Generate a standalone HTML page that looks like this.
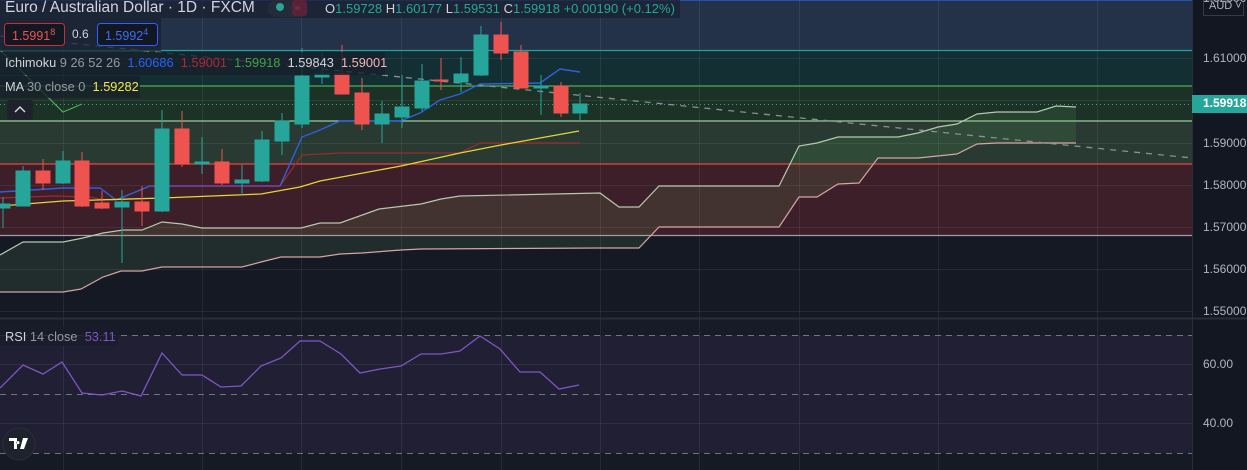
<!DOCTYPE html>
<html><head><meta charset="utf-8"><style>
html,body{margin:0;padding:0;background:#151924;width:1247px;height:470px;overflow:hidden;font-family:"Liberation Sans",sans-serif}
svg{position:absolute;left:0;top:0}
.t{position:absolute;white-space:nowrap;font-size:13px;color:#d1d4dc}
.ax{position:absolute;left:1203px;font-size:12px;color:#b2b5be}
</style></head><body>
<svg width="1247" height="470" viewBox="0 0 1247 470">
<rect x="0" y="0" width="1192" height="51" fill="#233149"/>
<rect x="0" y="51" width="1192" height="35" fill="#132f33"/>
<rect x="0" y="86" width="1192" height="35" fill="#1c3227"/>
<rect x="0" y="121" width="1192" height="43" fill="#283a31"/>
<rect x="0" y="164" width="1192" height="71" fill="#3c1f28"/>
<rect x="0" y="235" width="1192" height="83" fill="#151923"/>
<rect x="0" y="319" width="1192" height="16" fill="#171a27"/>
<rect x="0" y="335" width="1192" height="118" fill="#211f34"/>
<rect x="0" y="453" width="1192" height="17" fill="#161a25"/>
<rect x="1192" y="0" width="55" height="470" fill="#131722"/>
<g stroke="#ffffff" stroke-opacity="0.07" stroke-width="1">
<path d="M63.5 0V470M202.5 0V470M301.5 0V470M401.5 0V470M501.5 0V470M600.5 0V470M699.5 0V470M799.5 0V470M938.5 0V470M1097.5 0V470"/>
<path d="M0 58.5H1192M0 100.5H1192M0 143.5H1192M0 185.5H1192M0 227.5H1192M0 269.5H1192M0 311.5H1192M0 364.5H1192M0 423.5H1192"/>
</g>
<line x1="0" y1="318.5" x2="1247" y2="318.5" stroke="#2a2e39" stroke-width="2"/>
<line x1="1192.5" y1="0" x2="1192.5" y2="470" stroke="#2a2e39"/>
<line x1="0" y1="0.5" x2="1192" y2="0.5" stroke="#2962ff" stroke-opacity=".6"/>
<line x1="0" y1="50.5" x2="1192" y2="50.5" stroke="#22a39a" stroke-width="1.2"/>
<line x1="0" y1="86" x2="1192" y2="86" stroke="#4caf50" stroke-width="1.2"/>
<line x1="0" y1="121" x2="1192" y2="121" stroke="#9ccc9c" stroke-width="1.2"/>
<line x1="0" y1="164" x2="1192" y2="164" stroke="#e8453f" stroke-width="1.2"/>
<line x1="0" y1="235.5" x2="1192" y2="235.5" stroke="#a89aa2" stroke-width="1.2"/>
<line x1="0" y1="104.5" x2="1192" y2="104.5" stroke="#26a69a" stroke-dasharray="1 3"/>
<polygon fill="#6fb86f" fill-opacity="0.13" points="0,255 23,242 63,242 83,238 103,233 123,230 142,230 162,222 182,224 202,228 301,228 320,223 340,223 379,209 421,204 441,199 460,196 600,193 619,207 639,207 659,186 779,186 799,146 817,143 838,137 898,137 918,133 938,127 957,124 977,114 997,112 1037,112 1056,106 1076,107 1076,143 1037,143 997,143 977,144 957,154 918,158 878,158 859,183 838,184 817,197 799,197 779,227 659,227 639,248 600,248 421,249 401,250 362,253 340,254 320,257 281,257 261,262 242,267 162,267 142,271 121,271 103,277 81,289 63,292 0,292"/>
<polyline fill="none" stroke="#b7c8b0" stroke-width="1.2" points="0,255 23,242 63,242 83,238 103,233 123,230 142,230 162,222 182,224 202,228 301,228 320,223 340,223 379,209 421,204 441,199 460,196 600,193 619,207 639,207 659,186 779,186 799,146 817,143 838,137 898,137 918,133 938,127 957,124 977,114 997,112 1037,112 1056,106 1076,107"/>
<polyline fill="none" stroke="#d7a3a3" stroke-width="1.2" points="0,292 63,292 81,289 103,277 121,271 142,271 162,267 242,267 261,262 281,257 320,257 340,254 362,253 401,250 421,249 600,248 639,248 659,227 779,227 799,197 817,197 838,184 859,183 878,158 918,158 957,154 977,144 997,143 1076,143"/>
<line x1="0" y1="36" x2="1192" y2="158" stroke="#8a8f99" stroke-width="1.3" stroke-dasharray="6 6"/>
<polyline fill="none" stroke="#4caf50" stroke-width="1.2" points="0,50 63,112 82,104"/>
<polyline fill="none" stroke="#9b2a2a" stroke-width="1.3" points="0,198 55,196 90,197 100,199 116,200 150,186 280,186 302,155 340,153 460,153 480,143 580,143"/>
<polyline fill="none" stroke="#2f5fe0" stroke-width="1.4" points="0,192 63,188 100,188 116,200 150,186 280,186 302,137 320,130 340,121 400,121 420,113 440,100 460,94 480,84 540,83 560,69 580,72"/>
<polyline fill="none" stroke="#7a3a8a" stroke-width="1.4" points="150,186 280,186"/>
<polyline fill="none" stroke="#e8d33a" stroke-width="1.3" points="0,206 63,201 163,198 261,194 300,187 320,181 401,166 460,153 501,145 579,131"/>
<g stroke-width="1">
<g fill="#26a69a" stroke="#26a69a">
<line x1="3" y1="197" x2="3" y2="228"/><rect x="-4" y="204" width="14" height="4"/>
<line x1="23" y1="166" x2="23" y2="206"/><rect x="16" y="171" width="14" height="35"/>
<line x1="63" y1="151" x2="63" y2="184"/><rect x="56" y="161" width="14" height="22"/>
<line x1="122" y1="190" x2="122" y2="263"/><rect x="115" y="202" width="14" height="5"/>
<line x1="162" y1="110" x2="162" y2="212"/><rect x="155" y="129" width="14" height="82"/>
<line x1="202" y1="137" x2="202" y2="174"/><rect x="195" y="162" width="14" height="2"/>
<line x1="242" y1="165" x2="242" y2="195"/><rect x="235" y="180" width="14" height="3"/>
<line x1="262" y1="131" x2="262" y2="182"/><rect x="255" y="140" width="14" height="41"/>
<line x1="282" y1="113" x2="282" y2="155"/><rect x="275" y="121" width="14" height="20"/>
<line x1="302" y1="48" x2="302" y2="128"/><rect x="295" y="76" width="14" height="48"/>
<line x1="322" y1="52" x2="322" y2="84"/><rect x="315" y="74" width="14" height="3"/>
<line x1="382" y1="101" x2="382" y2="143"/><rect x="375" y="114" width="14" height="10"/>
<line x1="402" y1="75" x2="402" y2="128"/><rect x="395" y="107" width="14" height="10"/>
<line x1="422" y1="64" x2="422" y2="111"/><rect x="415" y="81" width="14" height="27"/>
<line x1="461" y1="57" x2="461" y2="92"/><rect x="454" y="74" width="14" height="8"/>
<line x1="481" y1="26" x2="481" y2="76"/><rect x="474" y="35" width="14" height="40"/>
<line x1="541" y1="75" x2="541" y2="115"/><rect x="534" y="86" width="14" height="2"/>
<line x1="580" y1="93" x2="580" y2="121"/><rect x="573" y="104" width="14" height="9"/>
</g>
<g fill="#ef5350" stroke="#ef5350">
<line x1="43" y1="159" x2="43" y2="190"/><rect x="36" y="171" width="14" height="12"/>
<line x1="82" y1="152" x2="82" y2="207"/><rect x="75" y="161" width="14" height="45"/>
<line x1="102" y1="191" x2="102" y2="209"/><rect x="95" y="203" width="14" height="5"/>
<line x1="142" y1="186" x2="142" y2="226"/><rect x="135" y="202" width="14" height="9"/>
<line x1="182" y1="111" x2="182" y2="167"/><rect x="175" y="129" width="14" height="35"/>
<line x1="222" y1="149" x2="222" y2="185"/><rect x="215" y="162" width="14" height="21"/>
<line x1="342" y1="45" x2="342" y2="94"/><rect x="335" y="74" width="14" height="20"/>
<line x1="362" y1="78" x2="362" y2="130"/><rect x="355" y="93" width="14" height="31"/>
<line x1="441" y1="58" x2="441" y2="90"/><rect x="434" y="80" width="14" height="1"/>
<line x1="501" y1="22" x2="501" y2="60"/><rect x="494" y="35" width="14" height="18"/>
<line x1="521" y1="45" x2="521" y2="88"/><rect x="514" y="52" width="14" height="36"/>
<line x1="561" y1="82" x2="561" y2="117"/><rect x="554" y="86" width="14" height="27"/>
</g>
</g>
<g stroke="#9598a1" stroke-opacity=".7" stroke-dasharray="6 5"><line x1="0" y1="335.5" x2="1192" y2="335.5"/><line x1="0" y1="394.5" x2="1192" y2="394.5"/><line x1="0" y1="453.5" x2="1192" y2="453.5"/></g>
<polyline fill="none" stroke="#7e57c2" stroke-width="1.3" points="0,388 23,365 43,374 62,362 82,393 102,395 122,391 141,396 162,353 182,375 202,375 221,387 241,386 261,366 281,358 300,341 320,341 341,354 360,373 380,369 401,366 421,354 441,354 460,351 480,336 500,349 520,372 540,372 559,389 579,385"/>
<rect x="0" y="0" width="680" height="18" fill="#1b2130" fill-opacity=".75"/>
<rect x="0" y="18" width="161" height="33" fill="#1b2130" fill-opacity=".75"/>
<rect x="0" y="52" width="385" height="23" fill="#18202a" fill-opacity=".8"/>
<rect x="0" y="76" width="140" height="22" fill="#18202a" fill-opacity=".8"/>
<rect x="0" y="326" width="118" height="20" fill="#1a1c2a" fill-opacity=".8"/>
<rect x="268" y="0" width="40" height="17" rx="8" fill="#252b38"/>
<circle cx="280" cy="7" r="4" fill="#26a69a"/>
<rect x="292" y="0" width="15" height="16" rx="3" fill="#5a2238"/>
<text x="295" y="11" font-size="9" fill="#b0305a" font-family="Liberation Sans">≈</text>
<rect x="4.5" y="23.5" width="60" height="22" rx="3" fill="#131722" stroke="#c2303a"/>
<rect x="97.5" y="23.5" width="60" height="22" rx="3" fill="#131722" stroke="#2962ff"/>
<rect x="7" y="100" width="26" height="20" rx="3" fill="#1e222d"/>
<path d="M15 112l5-5 5 5" fill="none" stroke="#d1d4dc" stroke-width="1.5"/>
<rect x="1192" y="95" width="55" height="18" fill="#26a69a"/>
<rect x="1203.5" y="0.5" width="40" height="15" fill="#131722" stroke="#363a45"/>
<circle cx="19" cy="444" r="16" fill="#1e222d" stroke="#2a2e39"/>
<path d="M9 438h8v11h-3v-8h-5z M18 441a1.6 1.6 0 1 0 0.01 0z M23 438h5l-4 11h-4z" fill="#fff"/>
</svg>
<div class="t" style="left:5px;top:-1px;font-size:15.5px">Euro / Australian Dollar · 1D · FXCM</div>
<div class="t" style="left:325px;top:1px;font-size:13px">O<span style="color:#26a69a">1.59728</span> H<span style="color:#26a69a">1.60177</span> L<span style="color:#26a69a">1.59531</span> C<span style="color:#26a69a">1.59918</span> <span style="color:#26a69a">+0.00190 (+0.12%)</span></div>
<div class="t" style="left:12px;top:27px;color:#ef5350;font-size:12.5px">1.5991<sup style="font-size:9px">8</sup></div>
<div class="t" style="left:72px;top:27px;font-size:12px">0.6</div>
<div class="t" style="left:105px;top:27px;color:#3d6ef5;font-size:12.5px">1.5992<sup style="font-size:9px">4</sup></div>
<div class="t" style="left:5px;top:55px;font-size:12.8px">Ichimoku <span style="color:#9598a1">9 26 52 26</span> &nbsp;<span style="color:#2962ff">1.60686</span> &nbsp;<span style="color:#b22833">1.59001</span> &nbsp;<span style="color:#43a047">1.59918</span> &nbsp;<span style="color:#d1d4dc">1.59843</span> &nbsp;<span style="color:#f0b8b8">1.59001</span></div>
<div class="t" style="left:5px;top:79px;font-size:12.8px">MA <span style="color:#9598a1">30 close 0</span> &nbsp;<span style="color:#f5e94a">1.59282</span></div>
<div class="t" style="left:5px;top:329px;font-size:12.8px">RSI <span style="color:#9598a1">14 close</span> &nbsp;<span style="color:#7e57c2">53.11</span></div>
<div class="ax" style="top:-9px">1.62000</div>
<div class="ax" style="left:1209px;top:0px;font-size:11px;color:#b2b5be">AUD ˅</div>
<div class="ax" style="top:51px">1.61000</div>
<div class="ax" style="top:96px;color:#fff;font-weight:bold">1.59918</div>
<div class="ax" style="top:136px">1.59000</div>
<div class="ax" style="top:178px">1.58000</div>
<div class="ax" style="top:220px">1.57000</div>
<div class="ax" style="top:262px">1.56000</div>
<div class="ax" style="top:304px">1.55000</div>
<div class="ax" style="top:357px">60.00</div>
<div class="ax" style="top:416px">40.00</div>
</body></html>
